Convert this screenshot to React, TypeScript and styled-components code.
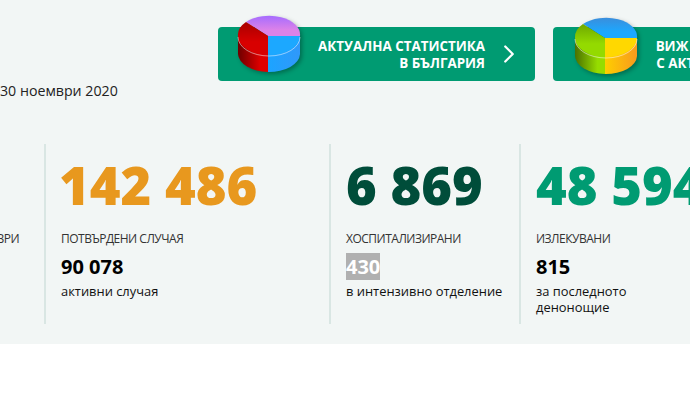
import styled, { createGlobalStyle } from "styled-components";
import { ChevronRight } from "lucide-react";

const GlobalStyle = createGlobalStyle`
  html, body {
    margin: 0;
    padding: 0;
    background: #fff;
    overflow: hidden;
    font-family: "Open Sans", "Noto Sans", sans-serif;
  }
`;

type PieColors = {
  back: string;
  top: string;
  leftDark: string;
  left: string;
  right: string;
  sideDark: string;
  sideLight: string;
  rightSideA: string;
  rightSideB: string;
  id: string;
};

const Pie = ({ colors }: { colors: PieColors }) => (
  <PieSvg viewBox="0 0 76 68" width="76" height="68">
    <defs>
      <linearGradient id={`${colors.id}-back`} x1="0" y1="0" x2="0" y2="1">
        <stop offset="0" stopColor={colors.back} />
        <stop offset="0.7" stopColor={colors.top} />
      </linearGradient>
      <linearGradient id={`${colors.id}-left`} x1="0" y1="0" x2="0" y2="1">
        <stop offset="0" stopColor={colors.leftDark} />
        <stop offset="0.6" stopColor={colors.left} />
      </linearGradient>
      <linearGradient id={`${colors.id}-sl`} x1="0" y1="0" x2="1" y2="0">
        <stop offset="0" stopColor={colors.sideDark} />
        <stop offset="0.75" stopColor={colors.sideLight} />
      </linearGradient>
      <linearGradient id={`${colors.id}-sr`} x1="0" y1="0" x2="1" y2="0">
        <stop offset="0" stopColor={colors.rightSideA} />
        <stop offset="1" stopColor={colors.rightSideB} />
      </linearGradient>
    </defs>
    <path d="M6 26 V44 A31 18.500 0 0 0 36 62 V45 L6 26 Z" fill={`url(#${colors.id}-sl)`} />
    <path d="M36 45 V62 A31 18.500 0 0 0 68 44 V26 Z" fill={`url(#${colors.id}-sr)`} />
    <path d="M36 26 L14 12 A31 19 0 0 1 68 26 Z" fill={`url(#${colors.id}-back)`} />
    <path d="M36 26 L14 12 A31 19 0 0 0 6 26 A31 19 0 0 0 36 45 Z" fill={`url(#${colors.id}-left)`} />
    <path d="M36 26 V45 A31 19 0 0 0 68 26 Z" fill={colors.right} />
    <path d="M6 27 A31 19 0 0 0 68 27" fill="none" stroke="#fff" strokeOpacity="0.5" strokeWidth="1" />
  </PieSvg>
);

const redPie: PieColors = {
  id: "red",
  back: "#a56cff",
  top: "#dc82e8",
  leftDark: "#a80000",
  left: "#d80000",
  right: "#1ca8ff",
  sideDark: "#6d0000",
  sideLight: "#e00000",
  rightSideA: "#1ca4ff",
  rightSideB: "#3098fa",
};

const greenPie: PieColors = {
  id: "green",
  back: "#3a8edc",
  top: "#1ca8ff",
  leftDark: "#6ea800",
  left: "#94da00",
  right: "#ffd800",
  sideDark: "#4a7000",
  sideLight: "#96dc00",
  rightSideA: "#ffce00",
  rightSideB: "#f79a1e",
};

const App = () => {
  return (
    <>
      <GlobalStyle />
      <Panel>
        <Actions>
          <ActionButton>
            <PieSlot>
              <Pie colors={redPie} />
            </PieSlot>
            <ActionText>
              АКТУАЛНА СТАТИСТИКА
              <br />В БЪЛГАРИЯ
            </ActionText>
            <ChevronRight size={30} strokeWidth={1.8} color="#fff" />
          </ActionButton>
          <ActionButton>
            <PieSlot $low>
              <Pie colors={greenPie} />
            </PieSlot>
            <ActionText>
              ВИЖ СТАТИСТИКАТА ЗА
              <br />С АКТУАЛНИ ДАННИ ОТ
            </ActionText>
            <ChevronRight size={30} strokeWidth={1.8} color="#fff" />
          </ActionButton>
        </Actions>
        <DateLine>30 ноември 2020</DateLine>
        <Stats>
          <Stat $width={141}>
            <Label>КЪМ 30 НОЕМВРИ</Label>
          </Stat>
          <Stat $width={285} $divided>
            <BigNumber $color="#e8981e" $pull={2}>
              142 486
            </BigNumber>
            <Label>ПОТВЪРДЕНИ СЛУЧАЯ</Label>
            <SubNumber>90 078</SubNumber>
            <SubText>активни случая</SubText>
          </Stat>
          <Stat $width={190} $divided>
            <BigNumber $color="#004d3a">6 869</BigNumber>
            <Label>ХОСПИТАЛИЗИРАНИ</Label>
            <SubNumber>
              <Marked>430</Marked>
            </SubNumber>
            <SubText>в интензивно отделение</SubText>
          </Stat>
          <Stat $width={190} $divided>
            <BigNumber $color="#009b72">48 594</BigNumber>
            <Label>ИЗЛЕКУВАНИ</Label>
            <SubNumber>815</SubNumber>
            <SubText>за последното денонощие</SubText>
          </Stat>
        </Stats>
      </Panel>
    </>
  );
};

const Panel = styled.div`
  width: 690px;
  height: 344px;
  box-sizing: border-box;
  padding-top: 27px;
  background: #f2f6f5;
  overflow: hidden;
`;

const Actions = styled.div`
  display: flex;
  gap: 18px;
  margin-left: 218px;
  width: 700px;
`;

const ActionButton = styled.div`
  position: relative;
  flex: none;
  display: flex;
  align-items: center;
  justify-content: flex-end;
  gap: 9px;
  box-sizing: border-box;
  width: 317px;
  height: 54px;
  padding-right: 11px;
  border-radius: 4px;
  background: #009b72;
`;

const PieSlot = styled.div<{ $low?: boolean }>`
  position: absolute;
  left: ${(p) => (p.$low ? "16px" : "14px")};
  top: ${(p) => (p.$low ? "-15px" : "-17px")};
`;

const PieSvg = styled.svg`
  display: block;
  filter: drop-shadow(2px 2px 2px rgba(0, 0, 0, 0.3));
`;

const ActionText = styled.div`
  padding-top: 1px;
  color: #fff;
  font-size: 13.4px;
  font-weight: 700;
  line-height: 17px;
  text-align: right;
  white-space: nowrap;
`;

const DateLine = styled.div`
  height: 36px;
  color: #222;
  font-size: 14.2px;
  line-height: 19px;
`;

const Stats = styled.div`
  display: flex;
  margin-left: -97px;
  margin-top: 27px;
  width: 1000px;
  height: 180px;
`;

const Stat = styled.div<{ $width: number; $divided?: boolean }>`
  flex: none;
  display: flex;
  flex-direction: column;
  box-sizing: border-box;
  width: ${(p) => p.$width}px;
  padding: 0 15px;
  border-left: 2px solid ${(p) => (p.$divided ? "#d9e6e3" : "transparent")};
`;

const BigNumber = styled.div<{ $color: string; $pull?: number }>`
  height: 86px;
  margin-left: ${(p) => -(p.$pull ?? 0)}px;
  color: ${(p) => p.$color};
  font-size: 52.5px;
  font-weight: 800;
  line-height: 82px;
  white-space: nowrap;
`;

const Label = styled.div`
  margin-bottom: 5px;
  color: #333;
  font-size: 12px;
  letter-spacing: -0.5px;
  line-height: 18px;
  white-space: nowrap;
  &:first-child {
    margin-top: 86px;
  }
`;

const SubNumber = styled.div`
  height: 27px;
  color: #000;
  font-size: 20px;
  font-weight: 700;
  line-height: 27px;
`;

const Marked = styled.span`
  display: inline-block;
  height: 27px;
  background: #b0b0b0;
  color: #fff;
`;

const SubText = styled.div`
  margin-top: 3px;
  color: #111;
  font-size: 12.9px;
  line-height: 16px;
`;

export default App;
